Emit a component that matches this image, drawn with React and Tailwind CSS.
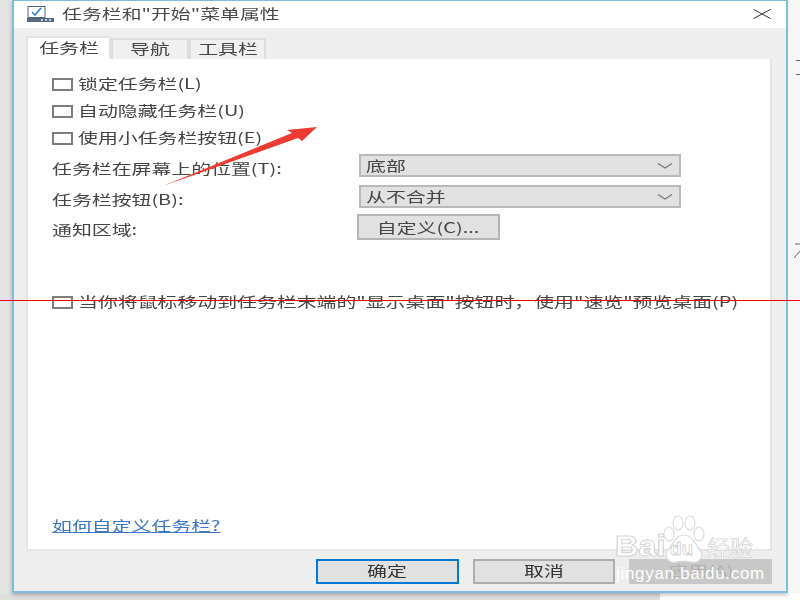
const font = { fontFamily: '"Noto Sans CJK SC", "Noto Sans", sans-serif' };

// the screenshot is stretched sideways, so text gets stretched with it
const Label = ({ children, className = '' }) => (
  <span className={`inline-block origin-left scale-x-[1.42] whitespace-nowrap text-[14px] leading-[18px] blur-[0.5px] ${className}`}>
    {children}
  </span>
);

const CheckRow = ({ label, className = '' }) => (
  <div className={`flex h-[18px] items-center ${className}`}>
    <div className="h-[13px] w-[21px] border-2 border-[#7d7d7d] bg-white"></div>
    <Label className="ml-[5px] -translate-y-px text-[#444444]">{label}</Label>
  </div>
);

const Select = ({ value, className = '' }) => (
  <div className={`flex h-[23px] w-[322px] items-center justify-between border-2 border-[#b9b9b9] bg-[#e1e1e1] pl-[5px] pr-[6px] ${className}`}>
    <Label className="-translate-y-px text-[#444444]">{value}</Label>
    <svg width="16" height="6" viewBox="0 0 16 6" fill="none" stroke="#777777" strokeWidth="1.2">
      <path d="M1 0.5 L8 5 L15 0.5" />
    </svg>
  </div>
);

const FooterButton = ({ children, className = '' }) => (
  <div className={`flex h-[25px] w-[143px] items-center justify-center border-2 ${className}`}>
    <span className="inline-block -translate-y-[2px] scale-x-[1.42] text-[14px] leading-[18px] blur-[0.5px]">{children}</span>
  </div>
);

const Tab = ({ children, active, className = '' }) => (
  <div
    className={`flex items-center justify-center border-2 border-b-0 ${
      active ? 'h-[23px] border-[#e2e2e2] bg-white' : 'mt-[2px] h-[21px] border-[#dddddd] bg-[#f0f0f0]'
    } ${className}`}
  >
    <span className="inline-block -translate-y-[2px] scale-x-[1.42] text-[14px] leading-[18px] text-[#444444] blur-[0.5px]">{children}</span>
  </div>
);

const Watermark = () => (
  <div className="absolute left-[614px] top-[512px] h-[74px] w-[146px] text-white">
    <span className="absolute left-[1px] top-[17px] origin-left scale-x-[1.12] text-[29px] font-bold leading-[34px] [-webkit-text-stroke:1px_#d2d2d2]" style={{ fontFamily: '"Liberation Sans", sans-serif' }}>Bai</span>
    <svg className="absolute left-[48px] top-[2px]" width="44" height="50" viewBox="0 0 44 50" fill="#ffffff" stroke="#dcdcdc" strokeWidth="1.2">
      <ellipse cx="7" cy="20" rx="5" ry="7" />
      <ellipse cx="16" cy="9" rx="5" ry="7" />
      <ellipse cx="28" cy="9" rx="5" ry="7" />
      <ellipse cx="37" cy="20" rx="5" ry="7" />
      <path d="M22 21 C14 21 11 30 6 36 C1 44 8 50 15 48 C19 47 25 47 29 48 C36 50 43 44 38 36 C33 30 30 21 22 21 Z" />
    </svg>
    <span className="absolute left-[56px] top-[25px] text-[19px] font-bold leading-[24px] [-webkit-text-stroke:0.8px_#cfcfcf]" style={{ fontFamily: '"Liberation Sans", sans-serif' }}>du</span>
    <span className="absolute left-[93px] top-[20px] origin-left scale-x-[1.05] text-[22px] leading-[28px] [-webkit-text-stroke:0.7px_#d2d2d2]">经验</span>
    <span className="absolute left-[2px] top-[51px] whitespace-nowrap text-[17px] leading-[22px] tracking-[0.7px]" style={{ fontFamily: '"Liberation Sans", sans-serif' }}>jingyan.baidu.com</span>
  </div>
);

export default function App() {
  return (
    <div className="relative h-[600px] w-[800px] overflow-hidden bg-white" style={font}>
      <div className="flex h-[593px]">
        {/* left strip of the desktop behind the dialog */}
        <div className="h-full w-[12px] bg-[#e4e4e4]"></div>

        {/* dialog */}
        <div className="flex h-full w-[776px] flex-col border-2 border-t border-[#7dbde0] bg-[#eeeeee] shadow-[0_2px_4px_rgba(0,0,0,0.25)]">
          <div className="flex h-[27px] shrink-0 items-center bg-white pl-[13px] pr-[15px]">
            <svg className="-translate-y-px" width="27" height="16" viewBox="0 0 27 16">
              <rect x="1" y="0.5" width="17" height="11" fill="#ffffff" stroke="#4a6078" />
              <path d="M5 6 L8 9 L14 2" fill="none" stroke="#2f80c8" strokeWidth="1.6" />
              <rect x="0" y="12" width="27" height="4" fill="#56697e" />
              <rect x="14" y="13" width="2" height="2" fill="#c4ccd4" />
              <rect x="18" y="13" width="2" height="2" fill="#c4ccd4" />
              <rect x="22" y="13" width="2" height="2" fill="#c4ccd4" />
            </svg>
            <Label className="ml-[8px] -translate-y-[2px] text-[#4a4a4a]">任务栏和"开始"菜单属性</Label>
            <svg className="ml-auto -translate-y-px" width="18" height="10" viewBox="0 0 18 10" fill="none" stroke="#333333" strokeWidth="1">
              <path d="M0.5 0.5 L17.5 9.5 M17.5 0.5 L0.5 9.5" />
            </svg>
          </div>

          <div className="flex flex-1 flex-col pl-[12px] pr-[14px]">
            <div className="mt-[8px] flex h-[23px] shrink-0">
              <Tab active className="w-[85px]">任务栏</Tab>
              <Tab className="w-[78px]">导航</Tab>
              <Tab className="w-[77px]">工具栏</Tab>
            </div>

            {/* tab panel */}
            <div className="flex h-[492px] flex-col border-2 border-t-0 border-[#e4e4e4] bg-white pl-[24px]">
              <CheckRow label="锁定任务栏(L)" className="mt-[16px]" />
              <CheckRow label="自动隐藏任务栏(U)" className="mt-[9px]" />
              <CheckRow label="使用小任务栏按钮(E)" className="mt-[9px]" />

              <div className="mt-[7px] grid grid-cols-[307px_1fr] items-center">
                <Label className="mt-[5px] text-[#444444]">任务栏在屏幕上的位置(T):</Label>
                <Select value="底部" />
              </div>
              <div className="mt-[8px] grid grid-cols-[307px_1fr] items-center">
                <Label className="mt-[4px] text-[#444444]">任务栏按钮(B):</Label>
                <Select value="从不合并" />
              </div>
              <div className="mt-[6px] grid grid-cols-[305px_1fr] items-center">
                <Label className="mt-[4px] text-[#444444]">通知区域:</Label>
                <div className="flex h-[26px] w-[143px] items-center justify-center border-2 border-[#b5b5b5] bg-[#e1e1e1]">
                  <span className="inline-block scale-x-[1.42] text-[14px] leading-[18px] text-[#444444] blur-[0.5px]">自定义(C)...</span>
                </div>
              </div>

              <CheckRow label={'当你将鼠标移动到任务栏末端的"显示桌面"按钮时，使用"速览"预览桌面(P)'} className="mt-[53px]" />

              <Label className="mt-auto mb-[15px] w-fit text-[#3b78c4] underline">如何自定义任务栏?</Label>
            </div>

            {/* footer buttons */}
            <div className="mt-[8px] flex gap-[14px] pl-[290px]">
              <FooterButton className="border-[#0078d7] bg-[#e1e1e1] text-[#333333]">确定</FooterButton>
              <FooterButton className="border-[#adadad] bg-[#e1e1e1] text-[#333333]">取消</FooterButton>
              <FooterButton className="border-[#c8c8c8] bg-[#c8c8c8] text-[#b0b0b0]">应用(A)</FooterButton>
            </div>
          </div>
        </div>

        {/* right strip with a bit of the page behind */}
        <div className="h-full w-[12px] bg-[#f6f6f6]">
          <div className="mt-[60px] h-px w-[4px] translate-x-[8px] bg-[#666666]"></div>
          <div className="mt-[13px] h-px w-[4px] translate-x-[8px] bg-[#666666]"></div>
          <svg className="mt-[168px] translate-x-[5px]" width="7" height="16" viewBox="0 0 7 16" fill="none" stroke="#666666">
            <path d="M2 1 H7 M7 8 L1 15" />
          </svg>
        </div>
      </div>
      <div className="h-[7px] w-[660px] bg-[#dfdfdf]"></div>

      {/* arrow pasted over the shot */}
      <svg className="absolute left-[160px] top-[124px]" width="160" height="66" viewBox="0 0 160 66">
        <path d="M3 62 L132 9 L127 6 L157 3 L142 17 L138 14 Z" fill="#ee3b33" />
      </svg>

      <div className="absolute left-0 top-[300px] h-px w-[800px] bg-[#f00000]"></div>

      <Watermark />
    </div>
  );
}
